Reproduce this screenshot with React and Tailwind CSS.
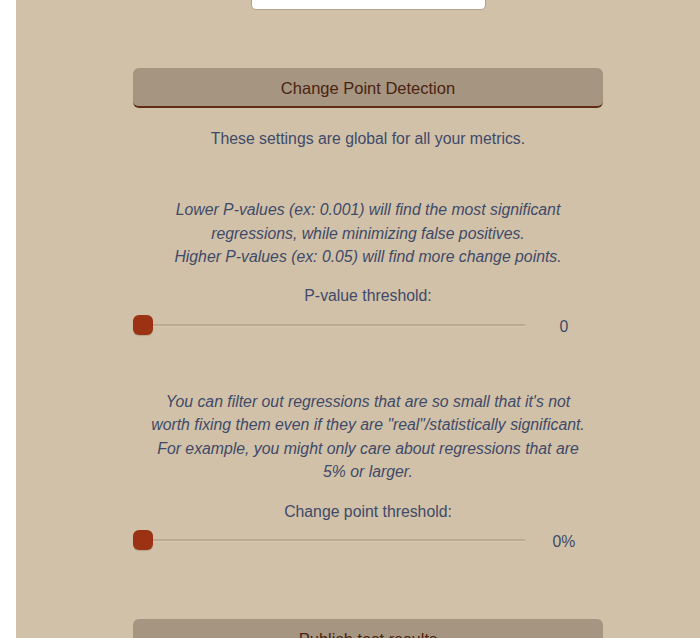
import React from "react";

function Slider({ value }) {
  return (
    <div className="flex items-center w-[470px] h-5">
      <div className="relative w-[392px] h-5 flex items-center">
        <div className="w-full h-[2px] bg-[#bcab91] shadow-[0_1px_0_rgba(255,255,255,0.15)]" />
        <div className="absolute left-0 top-0 w-5 h-5 rounded-[6px] bg-[#9b3213] shadow-[0_1px_1px_rgba(0,0,0,0.15)]" />
      </div>
      <div className="w-[78px] text-center text-[15.8px] text-[#3f4a68] mt-[5px]">{value}</div>
    </div>
  );
}

function SectionButton({ label, className = "" }) {
  return (
    <div
      className={`w-[470px] h-10 shrink-0 flex items-center justify-center pt-[3px] rounded-[6px] bg-[#a69581] border-b-2 border-[#5b2e15] text-[#4a2410] text-[16.5px] ${className}`}
    >
      {label}
    </div>
  );
}

export default function App() {
  return (
    <div
      className="w-[700px] h-[638px] overflow-hidden bg-white flex pl-4"
      style={{ fontFamily: '"Liberation Sans", Arial, sans-serif' }}
    >
      <div className="w-[704px] shrink-0 bg-[#d1c1a8] flex flex-col items-center">
        <div className="w-[235px] h-9 -mt-[26px] shrink-0 bg-white border border-[#b2a38c] rounded-[5px]" />

        <SectionButton label="Change Point Detection" className="mt-[58px]" />

        <p className="mt-[19px] leading-6 text-[15.8px] text-[#3f4a68]">
          These settings are global for all your metrics.
        </p>

        <p className="mt-[47px] w-[440px] text-center italic leading-[23.5px] text-[15.8px] text-[#3f4a68]">
          Lower P-values (ex: 0.001) will find the most significant regressions, while minimizing false positives.
          <br />
          Higher P-values (ex: 0.05) will find more change points.
        </p>

        <p className="mt-[15px] leading-6 text-[15.8px] text-[#3f4a68]">P-value threshold:</p>
        <div className="mt-[7px]">
          <Slider value="0" />
        </div>

        <p className="mt-[55px] w-[440px] text-center italic leading-[23.5px] text-[15.8px] text-[#3f4a68]">
          You can filter out regressions that are so small that it's not worth fixing them even if they are "real"/statistically significant. For example, you might only care about regressions that are 5% or larger.
        </p>

        <p className="mt-[16px] leading-6 text-[15.8px] text-[#3f4a68]">Change point threshold:</p>
        <div className="mt-[6px]">
          <Slider value="0%" />
        </div>

        <SectionButton label="Publish test results" className="mt-[69px]" />
      </div>
    </div>
  );
}
